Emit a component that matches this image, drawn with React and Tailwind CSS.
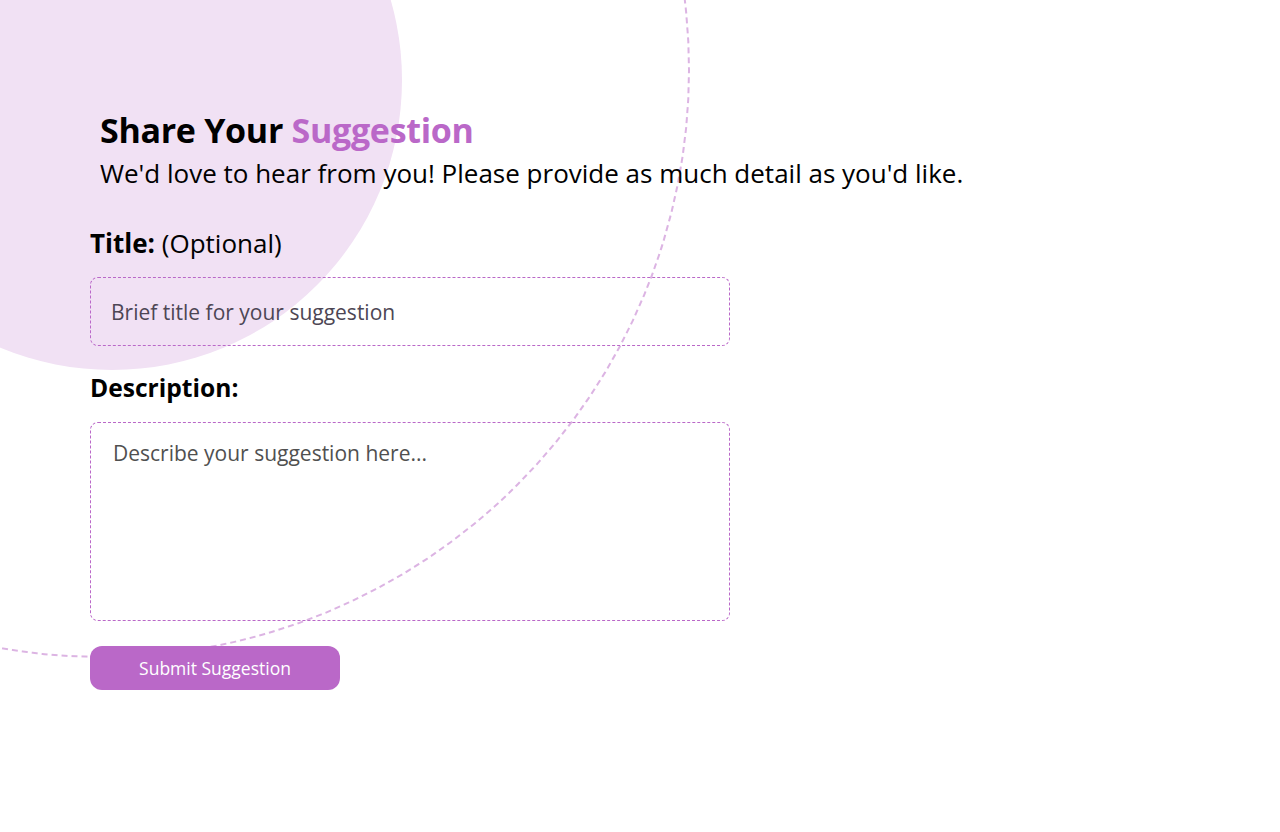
import React, { useState } from "react";

function App() {
  const [form, setForm] = useState({ title: "", description: "" });

  const handleChange = (e) => {
    const { name, value } = e.target;
    setForm((prev) => ({ ...prev, [name]: value }));
  };

  return (
    <div className="relative min-h-screen w-full overflow-hidden bg-white text-black" style={{ fontFamily: '"Open Sans", "Noto Sans", sans-serif' }}>
      {/* decorative circles */}
      <div className="absolute left-[-178px] top-[-210px] h-[580px] w-[580px] rounded-full bg-[#f1e1f4]" />
      <div className="absolute left-[-486px] top-[-518px] h-[1176px] w-[1176px] rounded-full border-2 border-dashed border-[#dcb4e3]" />

      <div className="relative pl-[90px] pt-[108px]">
        <div className="px-[10px]">
          <h1 className="text-[34px] font-bold leading-[44px] tracking-[-0.3px]">
            Share Your <span className="text-[#ba68c8]">Suggestion</span>
          </h1>
          <p className="mt-[5px] text-[26px] leading-[32px]">
            We'd love to hear from you! Please provide as much detail as you'd like.
          </p>
        </div>

        <form className="mt-[38px] w-[640px]" onSubmit={(e) => e.preventDefault()}>
          <label htmlFor="title" className="block text-[26px] leading-[32px]">
            <span className="font-bold">Title:</span> (Optional)
          </label>
          <input
            id="title"
            name="title"
            type="text"
            value={form.title}
            onChange={handleChange}
            placeholder="Brief title for your suggestion"
            className="mt-[18px] block h-[69px] w-full rounded-lg border border-dashed border-[#ba68c8] bg-transparent px-5 text-[21px] text-black placeholder-[#4d4654] outline-none"
          />

          <label htmlFor="description" className="mt-[26px] block text-[24.6px] font-bold leading-[32px]">
            Description:
          </label>
          <textarea
            id="description"
            name="description"
            value={form.description}
            onChange={handleChange}
            placeholder="Describe your suggestion here..."
            className="mt-[18px] block h-[199px] w-full resize-none rounded-lg border border-dashed border-[#ba68c8] bg-transparent px-[22px] pt-[15px] text-[21px] text-black placeholder-[#505050] outline-none"
          />

          <button
            type="submit"
            className="mt-[25px] flex h-[44px] w-[250px] items-center justify-center rounded-xl bg-[#ba68c8] text-[17.5px] font-medium text-white"
          >
            Submit Suggestion
          </button>
        </form>
      </div>
    </div>
  );
}

export default App;
